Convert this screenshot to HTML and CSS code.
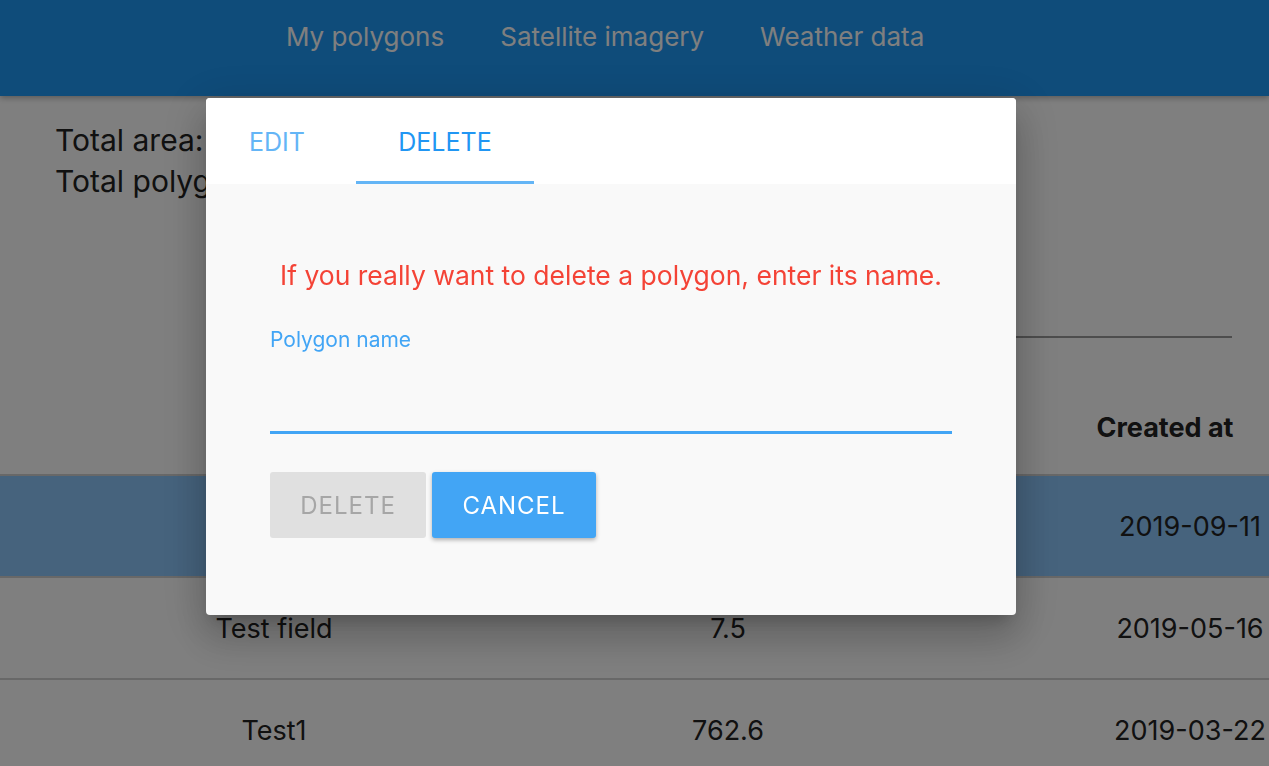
FILE: index.html
```html
<!DOCTYPE html>
<html>
<head>
  <meta charset="UTF-8">
  <title>My polygons</title>
  <link rel="stylesheet" href="styles.css">
</head>
<body>
  <header class="topbar">
    <nav class="nav">
      <a href="#">My polygons</a>
      <a href="#">Satellite imagery</a>
      <a href="#">Weather data</a>
    </nav>
  </header>

  <main class="page">
    <section class="summary">
      <p>Total area: 770.1 ha</p>
      <p>Total polygons: 3</p>
    </section>

    <div class="filter-row">
      <div class="filter"></div>
    </div>

    <table class="polygons">
      <thead>
        <tr>
          <th>Name</th>
          <th>Area, ha</th>
          <th class="created">Created at</th>
        </tr>
      </thead>
      <tbody>
        <tr class="selected">
          <td>My field</td>
          <td>0.1</td>
          <td>2019-09-11</td>
        </tr>
        <tr>
          <td>Test field</td>
          <td>7.5</td>
          <td>2019-05-16</td>
        </tr>
        <tr>
          <td>Test1</td>
          <td>762.6</td>
          <td>2019-03-22</td>
        </tr>
      </tbody>
    </table>
  </main>

  <div class="overlay">
    <div class="dialog">
      <div class="tabs">
        <button class="tab">EDIT</button>
        <button class="tab active">DELETE</button>
      </div>
      <div class="dialog-body">
        <p class="warning">If you really want to delete a polygon, enter its name.</p>
        <label class="field">
          <span class="field-label">Polygon name</span>
          <input class="field-input" type="text">
        </label>
        <div class="actions">
          <button class="btn btn-disabled" disabled>DELETE</button>
          <button class="btn btn-primary">CANCEL</button>
        </div>
      </div>
    </div>
  </div>
</body>
</html>
```

FILE: styles.css
```css
* {
  box-sizing: border-box;
}
html,
body {
  margin: 0;
  height: 100%;
  overflow: hidden;
}
body {
  font-family: Inter, "Noto Sans", sans-serif;
  background: #fff;
  color: #222;
}

.topbar {
  height: 96px;
  background: #1e98f4;
  box-shadow: 0 2px 6px rgba(0, 0, 0, 0.3);
  position: relative;
  z-index: 1;
}
.nav {
  display: flex;
  gap: 56px;
  padding: 21px 0 0 286px;
}
.nav a {
  color: #fff;
  font-size: 26px;
  line-height: 32px;
  text-decoration: none;
}

.summary {
  padding: 24px 55px 0;
}
.summary p {
  margin: 0;
  font-size: 30px;
  line-height: 41px;
}

.filter-row {
  display: flex;
  justify-content: flex-end;
  padding: 134px 37px 0 0;
}
.filter {
  width: 420px;
  border-bottom: 2px solid #9a9a9a;
}

.polygons {
  width: 1472px;
  border-collapse: collapse;
  margin-top: 42px;
  font-size: 27px;
}
.polygons th,
.polygons td {
  text-align: center;
  padding: 0;
}
.polygons th:nth-child(1) { width: 548px; }
.polygons th:nth-child(2) { width: 360px; }
.polygons th {
  height: 95px;
  font-weight: 700;
  border-bottom: 2px solid #d0d0d0;
}
.polygons th.created {
  padding-right: 50px;
}
.polygons td {
  height: 102px;
  border-bottom: 2px solid #d0d0d0;
}
.polygons tr.selected td {
  background: #8cc6fa;
}

.overlay {
  position: fixed;
  inset: 0;
  background: rgba(0, 0, 0, 0.5);
  z-index: 10;
  padding: 98px 0 0 206px;
}
.dialog {
  width: 810px;
  height: 517px;
  border-radius: 4px;
  overflow: hidden;
  background: #f9f9f9;
  display: flex;
  flex-direction: column;
  box-shadow: 0 11px 15px -7px rgba(0, 0, 0, 0.2),
    0 24px 38px 3px rgba(0, 0, 0, 0.14),
    0 9px 46px 8px rgba(0, 0, 0, 0.12);
}
.tabs {
  display: flex;
  height: 86px;
  background: #fff;
}
.tab {
  border: 0;
  background: none;
  font-family: inherit;
  font-size: 25px;
  color: #64b5f6;
  padding: 4px 8px 0 0;
  width: 150px;
  border-bottom: 3px solid transparent;
}
.tab.active {
  width: 178px;
  padding-right: 0;
  color: #2196f3;
  border-bottom-color: #64b5f6;
}

.dialog-body {
  padding: 0 64px;
}
.warning {
  margin: 74px 0 0;
  text-align: center;
  color: #f44336;
  font-size: 26.5px;
  line-height: 34px;
}
.field {
  display: block;
  margin-top: 34px;
}
.field-label {
  display: block;
  color: #42a5f5;
  font-size: 21px;
  line-height: 28px;
}
.field-input {
  display: block;
  width: 100%;
  height: 80px;
  border: 0;
  border-bottom: 3px solid #42a5f5;
  background: transparent;
  outline: none;
  font-size: 22px;
}
.actions {
  display: flex;
  gap: 6px;
  margin-top: 38px;
}
.btn {
  height: 66px;
  border: 0;
  border-radius: 3px;
  font-family: inherit;
  font-size: 24px;
  letter-spacing: 1px;
}
.btn-disabled {
  width: 156px;
  background: #e0e0e0;
  color: #a6a6a6;
}
.btn-primary {
  width: 164px;
  background: #42a5f5;
  color: #fff;
  box-shadow: 0 2px 4px rgba(0, 0, 0, 0.3);
}
```
